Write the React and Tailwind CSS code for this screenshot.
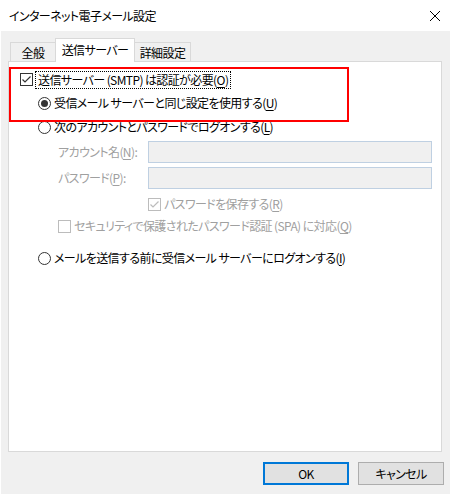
const font = {
  fontFamily: '"Noto Sans CJK JP", "Liberation Sans", sans-serif',
  fontFeatureSettings: '"palt" 1',
};

function Acc({ children }) {
  return <span className="underline underline-offset-2">{children}</span>;
}

function CheckBox({ checked, disabled }) {
  const c = disabled ? "#bcbcbc" : "#333333";
  return (
    <span
      className={`flex h-[13px] w-[13px] shrink-0 items-center justify-center border bg-white ${
        disabled ? "border-[#bcbcbc]" : "border-[#333333]"
      }`}
    >
      {checked && (
        <svg width="11" height="11" viewBox="0 0 11 11">
          <path d="M1.5 5.5 L4 8 L9.5 2.5" fill="none" stroke={c} strokeWidth="1.2" />
        </svg>
      )}
    </span>
  );
}

function Radio({ checked }) {
  return (
    <span className="flex h-[13px] w-[13px] shrink-0 items-center justify-center rounded-full border border-[#333333] bg-white">
      {checked && <span className="h-[7px] w-[7px] rounded-full bg-[#333333]" />}
    </span>
  );
}

export default function App() {
  return (
    <div
      className="flex h-[495px] w-[451px] flex-col bg-white text-[12px] leading-none tracking-[-0.6px] text-black"
      style={font}
    >
      {/* title bar */}
      <div className="flex h-[31px] shrink-0 items-center justify-between pl-[9px] pr-[11px]">
        <span>インターネット電子メール設定</span>
        <svg width="10" height="10" viewBox="0 0 10 10">
          <path d="M0 0 L10 10 M10 0 L0 10" stroke="#000" strokeWidth="1" />
        </svg>
      </div>

      <div className="mx-px mb-px flex flex-1 flex-col bg-[#f0f0f0] pl-[7px] pr-[7px] pt-[7px]">
        {/* tabs */}
        <div className="relative z-10 flex h-[23px] items-end pl-[2px]">
          <div className="flex h-[19px] w-[46px] items-center justify-center border border-b-0 border-[#d9d9d9] pt-px">
            全般
          </div>
          <div className="relative z-10 -mx-px -mb-px flex h-[24px] w-[80px] items-center justify-center border border-b-0 border-[#d9d9d9] bg-white pb-px">
            送信サーバー
          </div>
          <div className="flex h-[19px] w-[57px] items-center justify-center border border-b-0 border-[#d9d9d9] pt-px">
            詳細設定
          </div>
        </div>

        {/* panel */}
        <div className="relative flex h-[391px] w-[434px] flex-col border border-[#d9d9d9] bg-white pt-[6px]">
          <div className="pointer-events-none absolute left-0 top-[5px] h-[55px] w-[340px] border-2 border-[#ff0000]" />

          <div className="flex h-[23px] items-center pl-[11px]">
            <CheckBox checked />
            <span className="ml-[2px] border border-dotted border-black px-[2px] py-[2px]">
              送信サーバー (SMTP) は認証が必要(<Acc>O</Acc>)
            </span>
          </div>

          <div className="flex h-[24px] items-center gap-[3px] pl-[29px]">
            <Radio checked />
            <span>
              受信メール サーバーと同じ設定を使用する(<Acc>U</Acc>)
            </span>
          </div>

          <div className="flex h-[24px] items-center gap-[3px] pl-[29px]">
            <Radio />
            <span>
              次のアカウントとパスワードでログオンする(<Acc>L</Acc>)
            </span>
          </div>

          <div className="mt-[2px] flex h-[22px] items-center pl-[49px] text-[#a0a0a0]">
            <span className="w-[90px]">
              アカウント名(<Acc>N</Acc>):
            </span>
            <div className="h-[22px] w-[284px] border border-[#bfd0e2] bg-[#f0f0f0]" />
          </div>

          <div className="mt-[4px] flex h-[22px] items-center pl-[49px] text-[#a0a0a0]">
            <span className="w-[90px]">
              パスワード(<Acc>P</Acc>):
            </span>
            <div className="h-[22px] w-[284px] border border-[#bfd0e2] bg-[#f0f0f0]" />
          </div>

          <div className="mt-[3px] flex h-[24px] items-center gap-[3px] pl-[139px] text-[#a0a0a0]">
            <CheckBox checked disabled />
            <span>
              パスワードを保存する(<Acc>R</Acc>)
            </span>
          </div>

          <div className="flex h-[20px] items-center gap-[3px] pl-[49px] text-[#a0a0a0]">
            <CheckBox disabled />
            <span>
              セキュリティで保護されたパスワード認証 (SPA) に対応(<Acc>Q</Acc>)
            </span>
          </div>

          <div className="mt-[12px] flex h-[20px] items-center gap-[3px] pl-[29px]">
            <Radio />
            <span>
              メールを送信する前に受信メール サーバーにログオンする(<Acc>I</Acc>)
            </span>
          </div>
        </div>

        {/* buttons */}
        <div className="mt-[10px] flex justify-end gap-[9px] pr-0">
          <button className="flex h-[23px] w-[86px] items-center justify-center border-2 border-[#0078d7] bg-[#e1e1e1]">
            OK
          </button>
          <button className="-mr-px flex h-[23px] w-[86px] items-center justify-center border border-[#adadad] bg-[#e1e1e1]">
            キャンセル
          </button>
        </div>
      </div>
    </div>
  );
}
